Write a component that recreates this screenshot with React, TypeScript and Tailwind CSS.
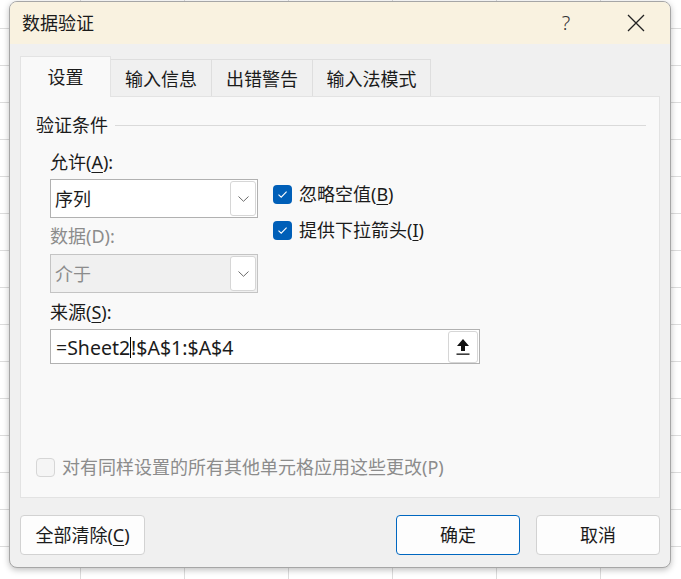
import { useState } from 'react';

function Check({ checked, disabled }: { checked: boolean; disabled?: boolean }) {
  if (checked) {
    return (
      <span className="flex h-[19px] w-[19px] items-center justify-center rounded-[4px] bg-[#005fb8]">
        <svg width="11" height="9" viewBox="0 0 11 9" fill="none">
          <path d="M1.5 4.6 L4.2 7.2 L9.6 1.6" stroke="#ffffff" strokeWidth="1.1" />
        </svg>
      </span>
    );
  }
  return (
    <span
      className={
        'h-[19px] w-[19px] rounded-[4px] border ' +
        (disabled ? 'border-[#d6d6d6] bg-[#f5f5f5]' : 'border-[#8a8a8a] bg-white')
      }
    />
  );
}

function Chevron() {
  return (
    <span className="flex h-[35px] w-[26px] items-center justify-center rounded-[3px] border border-[#d6d6d6] bg-white">
      <svg width="11" height="6" viewBox="0 0 11 6" fill="none">
        <path d="M0.5 0.5 L5.5 5.3 L10.5 0.5" stroke="#6b6b6b" strokeWidth="1" />
      </svg>
    </span>
  );
}

const tabs = ['设置', '输入信息', '出错警告', '输入法模式'];
const tabW = ['w-[91px]', 'w-[101px]', 'w-[101px]', 'w-[118px]'];

export default function App() {
  const [active, setActive] = useState(0);
  const [ignoreBlank, setIgnoreBlank] = useState(true);
  const [dropDown, setDropDown] = useState(true);

  return (
    <div className="h-[579px] w-[681px] overflow-hidden bg-white bg-[linear-gradient(to_right,#dcdcdc_1px,transparent_1px),linear-gradient(to_bottom,#dcdcdc_1px,transparent_1px)] bg-[size:104px_37px] bg-[position:80px_28px] pt-[1px] pl-[9px] font-['Noto_Sans','Noto_Sans_CJK_SC',sans-serif] text-[18px] text-[#1b1b1b]">
      <div className="flex h-[567px] w-[662px] flex-col overflow-hidden rounded-[8px] border border-[#a6a6a6] bg-[#f0f0f0] shadow-[0_2px_6px_rgba(0,0,0,0.25)]">
        {/* title bar */}
        <div className="flex h-[42px] shrink-0 items-center bg-[#f9f2e0] pl-[12px] pr-[11px]">
          <span className="leading-[24px]">数据验证</span>
          <span className="ml-auto flex w-[46px] justify-center text-[20px] font-light leading-[24px] text-[#333]">?</span>
          <span className="ml-[24px] flex w-[46px] justify-center">
            <svg width="18" height="18" viewBox="0 0 18 18" fill="none">
              <path d="M1 1 L17 17 M17 1 L1 17" stroke="#222" strokeWidth="1.3" />
            </svg>
          </span>
        </div>

        <div className="flex flex-1 flex-col px-[10px] pt-[12px] pb-[14px]">
          {/* tabs */}
          <div className="flex h-[40px] items-end">
            {tabs.map((t, i) =>
              i === active ? (
                <button
                  key={t}
                  onClick={() => setActive(i)}
                  className={tabW[i] + ' relative z-10 -mb-px flex h-[41px] items-center justify-center border border-b-0 border-[#e3e3e3] bg-[#f9f9f9] leading-[24px]'}
                >
                  {t}
                </button>
              ) : (
                <button
                  key={t}
                  onClick={() => setActive(i)}
                  className={tabW[i] + ' flex h-[37px] items-center justify-center border border-b-0 border-l-0 border-[#dedede] bg-[#f0f0f0] pt-px leading-[24px]'}
                >
                  {t}
                </button>
              )
            )}
          </div>

          {/* panel */}
          <div className="flex h-[402px] flex-col border border-[#e3e3e3] bg-[#f9f9f9] pt-[16px] pr-[13px] pl-[15px] pb-[18px]">
            <div className="flex items-center gap-[7px]">
              <span className="leading-[24px]">验证条件</span>
              <span className="h-px flex-1 bg-[#dadada]" />
            </div>

            <div className="ml-[14px] mt-[13px] flex">
              <div className="flex w-[208px] flex-col">
                <span className="leading-[24px]">
                  允许(<span className="underline underline-offset-[3px]">A</span>):
                </span>
                <div className="mt-[5px] flex h-[39px] items-center justify-between border border-[#b1b1b1] bg-white pl-[4px] pr-[1px]">
                  <span className="leading-[24px]">序列</span>
                  <Chevron />
                </div>
                <span className="mt-[6px] leading-[24px] text-[#8c8c8c]">数据(D):</span>
                <div className="mt-[6px] flex h-[39px] items-center justify-between border border-[#c4c4c4] bg-[#f0f0f0] pl-[4px] pr-[1px]">
                  <span className="leading-[24px] text-[#8c8c8c]">介于</span>
                  <Chevron />
                </div>
              </div>

              <div className="ml-[15px] mt-[26px] flex flex-col">
                <button onClick={() => setIgnoreBlank(!ignoreBlank)} className="flex h-[36px] items-center gap-[7px]">
                  <Check checked={ignoreBlank} />
                  <span className="leading-[24px]">
                    忽略空值(<span className="underline underline-offset-[3px]">B</span>)
                  </span>
                </button>
                <button onClick={() => setDropDown(!dropDown)} className="flex h-[36px] items-center gap-[7px]">
                  <Check checked={dropDown} />
                  <span className="leading-[24px]">
                    提供下拉箭头(<span className="underline underline-offset-[3px]">I</span>)
                  </span>
                </button>
              </div>
            </div>

            <span className="ml-[14px] mt-[7px] leading-[24px]">
              来源(<span className="underline underline-offset-[3px]">S</span>):
            </span>
            <div className="ml-[14px] mt-[5px] flex h-[35px] w-[430px] items-center justify-between border border-[#b1b1b1] bg-white pl-[5px] pr-[1px]">
              <span className="text-[19.5px] leading-[24px]">
                =Sheet2
                <span className="inline-block h-[21px] w-px translate-y-[3px] bg-black" />
                !$A$1:$A$4
              </span>
              <span className="flex h-[32px] w-[30px] items-center justify-center rounded-[3px] border border-[#d6d6d6] bg-white">
                <svg width="14" height="18" viewBox="0 0 14 18">
                  <path d="M7 1 L13 8 L9 8 L9 13 L5 13 L5 8 L1 8 Z" fill="#111" />
                  <rect x="0.5" y="15.5" width="13" height="1.3" fill="#111" />
                </svg>
              </span>
            </div>

            <div className="mt-auto flex items-center gap-[7px]">
              <Check checked={false} disabled />
              <span className="leading-[24px] text-[#8c8c8c]">对有同样设置的所有其他单元格应用这些更改(P)</span>
            </div>
          </div>

          {/* buttons */}
          <div className="mt-[17px] flex">
            <button className="h-[40px] w-[125px] rounded-[4px] border border-[#d2d2d2] bg-[#fdfdfd] leading-[24px]">
              全部清除(<span className="underline underline-offset-[3px]">C</span>)
            </button>
            <button className="ml-auto h-[40px] w-[124px] rounded-[4px] border border-[#0067c0] bg-[#fdfdfd] leading-[24px]">
              确定
            </button>
            <button className="ml-[16px] h-[40px] w-[124px] rounded-[4px] border border-[#d2d2d2] bg-[#fdfdfd] leading-[24px]">
              取消
            </button>
          </div>
        </div>
      </div>
    </div>
  );
}
